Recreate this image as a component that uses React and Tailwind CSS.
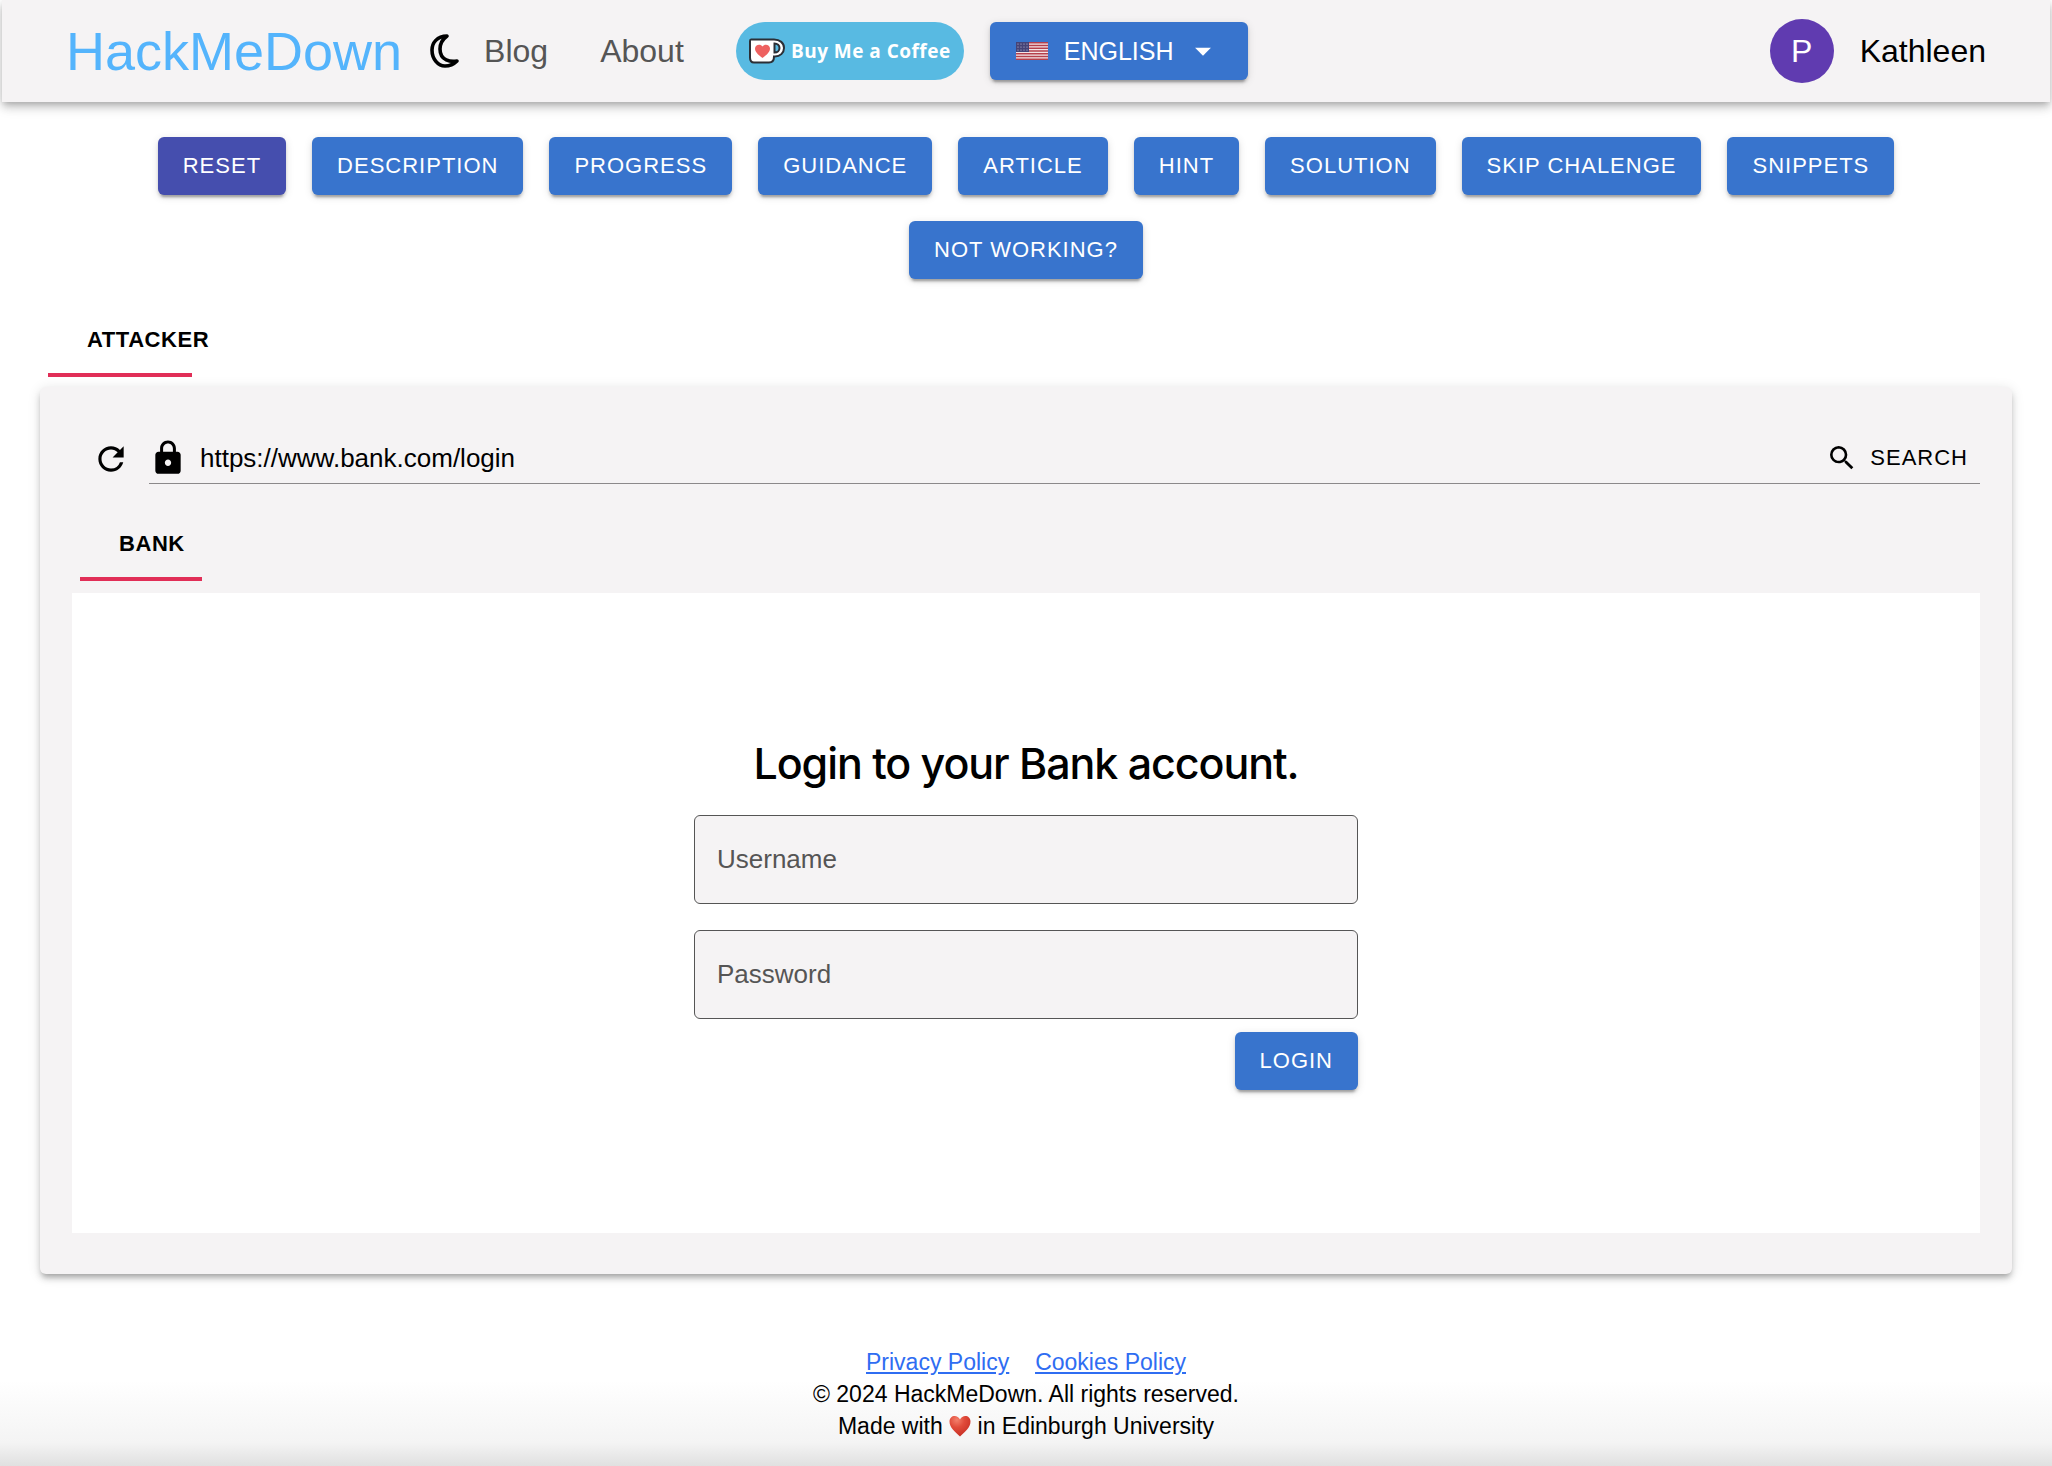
import React, { useState } from 'react';
import { MdRefresh, MdLock, MdSearch, MdArrowDropDown } from 'react-icons/md';

const btn =
  'h-[58px] rounded-md text-white leading-8 uppercase whitespace-nowrap shadow-[0_5px_2px_-3px_rgba(0,0,0,0.2),0_3px_3px_0_rgba(0,0,0,0.14),0_2px_8px_0_rgba(0,0,0,0.12)]';
const btnText = 'px-[25px] text-[22px] tracking-[1px]';
const tab =
  'h-[65px] pl-[39px] pb-[6px] text-left text-[22px] leading-8 font-bold tracking-wide uppercase border-b-4 border-[#e12e57]';
const field =
  'block w-full h-[89px] px-[22px] rounded-md border border-[#555] bg-[#f5f3f4] text-[26px] leading-8 placeholder:text-[#555]';

const actions = [
  'Reset',
  'Description',
  'Progress',
  'Guidance',
  'Article',
  'Hint',
  'Solution',
  'Skip Chalenge',
  'Snippets',
  'Not working?',
];

function MoonIcon() {
  return (
    <svg viewBox="0 0 32 38" className="w-8 h-[38px]" fill="none" stroke="currentColor" strokeWidth="3.6" strokeLinejoin="round">
      <path d="M19 4C9 4 4 11 4 18c0 9 6 16 13 16 5 0 9-2 12-5-6 1-17 0-17-12C12 11 15 7 19 4z" />
    </svg>
  );
}

function CupIcon() {
  return (
    <svg viewBox="0 0 36 26" className="w-9 h-[26px]">
      <path d="M2 1.500h23c6 0 10 3.500 10 8.500s-4 8.500-9 8.500h-1c0 4-2 6-5 6H5c-3 0-4-2-4-5V3c0-1 0-1.500 1-1.500z" fill="#fff" stroke="#2b2f36" strokeWidth="2" />
      <path d="M25.500 5.500c3 0 5 2 5 4.500s-2 4.500-5 4.500z" fill="#58bae2" stroke="#2b2f36" strokeWidth="2" />
      <path d="M13.500 20C9 16.500 6 14 6 10.500c0-4 5.500-5 7.500-2 2-3 7.500-2 7.500 2 0 3.500-3 6-7.500 9.500z" fill="#ee6160" />
    </svg>
  );
}

function FlagIcon() {
  return (
    <svg viewBox="0 0 32 18" className="w-8 h-[18px]">
      <rect width="32" height="18" fill="#f3e4e6" />
      {[0, 1, 2, 3, 4, 5, 6].map((i) => (
        <rect key={i} y={i * 2.75} width="32" height="1.5" fill="#b5404c" />
      ))}
      <rect width="13" height="10" fill="#454377" />
      {[2, 5, 8, 11].map((x) =>
        [2, 5, 8].map((y) => <circle key={`${x}-${y}`} cx={x} cy={y} r="0.6" fill="#c9c8dd" />)
      )}
    </svg>
  );
}

function Heart() {
  return (
    <svg viewBox="0 0 22 22" className="inline w-[22px] h-[22px] align-[-3px]">
      <defs>
        <radialGradient id="heart" cx="0.35" cy="0.2" r="0.9">
          <stop offset="0" stopColor="#f3806c" />
          <stop offset="0.4" stopColor="#e14b3a" />
          <stop offset="1" stopColor="#c22a20" />
        </radialGradient>
      </defs>
      <path d="M11 21.500C6 17 .5 12.500.5 6.500c0-6.500 8-7.500 10.500-2 2.500-5.500 10.500-4.500 10.500 2 0 6-5.500 10.500-10.500 15z" fill="url(#heart)" />
    </svg>
  );
}

function Navbar() {
  return (
    <header className="mx-[2px] h-[102px] px-16 flex items-center bg-[#f5f3f4] shadow-[0_3px_6px_-2px_rgba(0,0,0,0.2),0_6px_8px_0_rgba(0,0,0,0.14),0_2px_16px_0_rgba(0,0,0,0.12)]">
      <a href="#" className="text-[54px] leading-[64px] text-[#54b4fc]">HackMeDown</a>
      <button aria-label="Toggle theme" className="ml-[26px]">
        <MoonIcon />
      </button>
      <nav className="ml-6 flex gap-[52px] text-[32px] leading-10 text-[#555]">
        <a href="#">Blog</a>
        <a href="#">About</a>
      </nav>
      <a href="#" className="ml-[52px] w-[228px] h-[58px] rounded-full bg-[#58bae2] text-white flex items-center justify-center gap-[6px] font-['Open_Sans',sans-serif] text-[19px] font-bold tracking-wide whitespace-nowrap">
        <CupIcon />
        Buy Me a Coffee
      </a>
      <button className={`${btn} ml-[26px] px-[26px] bg-[#3874cd] flex items-center`}>
        <FlagIcon />
        <span className="ml-4 text-[25px]">English</span>
        <MdArrowDropDown className="ml-[10px] w-[38px] h-[38px]" />
      </button>
      <div className="ml-auto flex items-center gap-[26px] text-[32px] leading-10">
        <div className="w-16 h-16 rounded-full bg-[#603bb0] text-white flex items-center justify-center">P</div>
        <span>Kathleen</span>
      </div>
    </header>
  );
}

function Browser() {
  const [url, setUrl] = useState('https://www.bank.com/login');

  return (
    <section className="mx-10 mt-[10px] px-8 pt-[50px] pb-[41px] rounded-md bg-[#f5f3f4] shadow-[0_5px_5px_-3px_rgba(0,0,0,0.2),0_5px_6px_0_rgba(0,0,0,0.14),0_2px_13px_0_rgba(0,0,0,0.12)]">
      <div className="pl-5 flex items-center">
        <button aria-label="Reload" className="pb-1">
          <MdRefresh className="w-[38px] h-[38px]" />
        </button>
        <div className="ml-[19px] h-[47px] pb-1 flex-1 flex items-center border-b border-[#8b898a]">
          <MdLock className="w-[38px] h-[38px]" />
          <input
            aria-label="Address"
            value={url}
            onChange={(e) => setUrl(e.target.value)}
            className="ml-[13px] flex-1 bg-transparent text-[26px] leading-8 outline-none"
          />
          <button className="px-3 flex items-center gap-3 text-[22px] leading-8 tracking-[1px] uppercase">
            <MdSearch className="w-8 h-8" />
            Search
          </button>
        </div>
      </div>

      <div className="ml-2 mt-8">
        <button className={`${tab} w-[122px]`}>Bank</button>
      </div>

      <div className="mt-3 h-[640px] bg-white flex flex-col items-center pt-[140px]">
        <form className="w-[664px]" onSubmit={(e) => e.preventDefault()}>
          <h1 className="mb-[22px] text-center text-[43px] leading-[60px] font-['Inter',sans-serif] font-medium tracking-tight">Login to your Bank account.</h1>
          <input aria-label="Username" placeholder="Username" className={field} />
          <input type="password" aria-label="Password" placeholder="Password" className={`${field} mt-[26px]`} />
          <div className="mt-[13px] flex justify-end">
            <button className={`${btn} ${btnText} bg-[#3874cd]`}>Login</button>
          </div>
        </form>
      </div>
    </section>
  );
}

export default function App() {
  return (
    <div className="min-h-screen flex flex-col bg-white text-black font-['Liberation_Sans',Arial,sans-serif]">
      <Navbar />

      <div className="mt-[35px] px-10 flex flex-wrap justify-center gap-[26px]">
        {actions.map((name) => (
          <button key={name} className={`${btn} ${btnText} ${name === 'Reset' ? 'bg-[#454eae]' : 'bg-[#3874cd]'}`}>
            {name}
          </button>
        ))}
      </div>

      <div className="ml-12 mt-[33px]">
        <button className={`${tab} w-[144px]`}>Attacker</button>
      </div>

      <Browser />

      <footer className="mt-9 flex-1 pt-9 text-center text-[23px] leading-8 bg-linear-to-b from-white from-45% via-[#f4f4f4] via-85% to-[#e0e0e0]">
        <div className="flex justify-center gap-[26px] text-[#2f6df2] underline">
          <a href="#">Privacy Policy</a>
          <a href="#">Cookies Policy</a>
        </div>
        <p>© 2024 HackMeDown. All rights reserved.</p>
        <p>Made with <Heart /> in Edinburgh University</p>
      </footer>
    </div>
  );
}
